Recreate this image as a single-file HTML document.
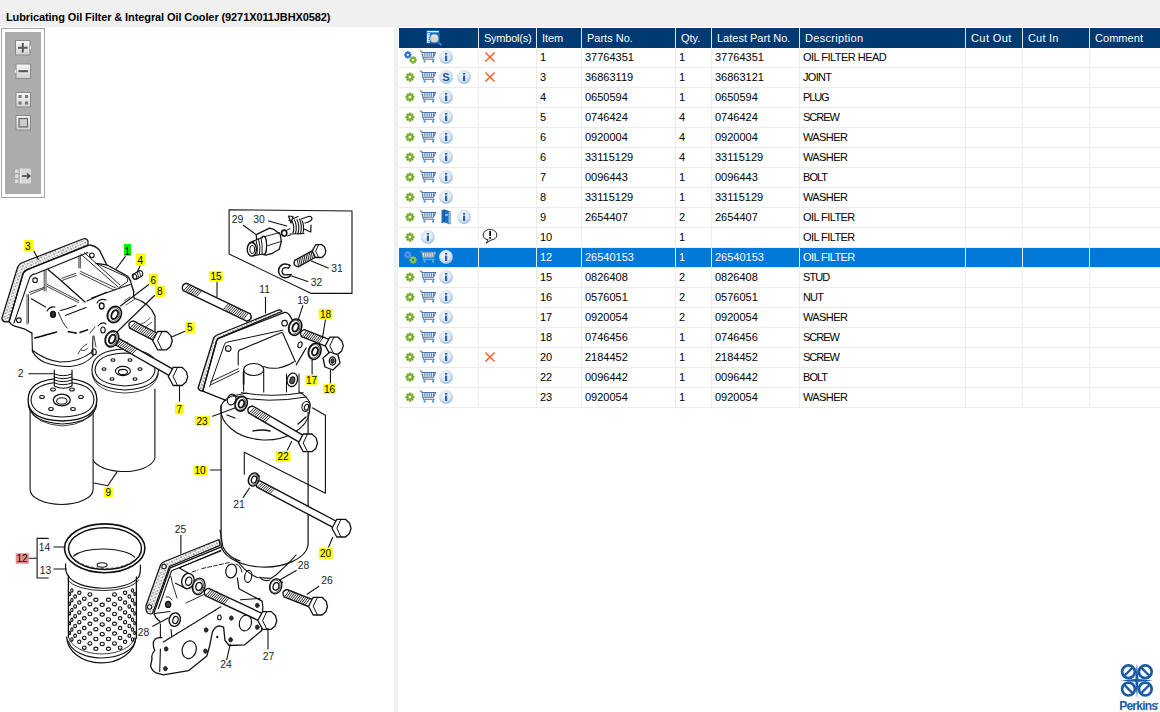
<!DOCTYPE html>
<html><head><meta charset="utf-8">
<style>
*{margin:0;padding:0;box-sizing:border-box}
html,body{width:1160px;height:712px;overflow:hidden;background:#fff;font-family:"Liberation Sans",sans-serif}
.a{position:absolute}
.t{position:absolute;font-size:11px;line-height:13px;white-space:nowrap;color:#000}
.h{color:#fff}
.ttl{font-weight:bold;color:#000}
svg{position:absolute;overflow:visible}
</style></head><body>

<div class="a" style="left:0;top:0;width:1160px;height:27px;background:#f0f0f0"></div>
<div class="t ttl" style="left:6px;top:11px;letter-spacing:-0.1px">Lubricating Oil Filter &amp; Integral Oil Cooler (9271X011JBHX0582)</div>
<div class="a" style="left:394px;top:27px;width:4px;height:685px;background:#f0f0f0"></div>
<div class="a" style="left:1px;top:28px;width:44px;height:170px;border:1px solid #a4a4a4;background:#fff"></div>
<div class="a" style="left:5px;top:32px;width:36px;height:162px;background:#acacac"></div>
<div class="a" style="left:399px;top:28px;width:761px;height:20px;background:#003a72"></div>
<div class="a" style="left:478px;top:28px;width:1px;height:20px;background:#dfe5ee"></div>
<div class="a" style="left:536px;top:28px;width:1px;height:20px;background:#dfe5ee"></div>
<div class="a" style="left:581px;top:28px;width:1px;height:20px;background:#dfe5ee"></div>
<div class="a" style="left:675px;top:28px;width:1px;height:20px;background:#dfe5ee"></div>
<div class="a" style="left:711px;top:28px;width:1px;height:20px;background:#dfe5ee"></div>
<div class="a" style="left:799px;top:28px;width:1px;height:20px;background:#dfe5ee"></div>
<div class="a" style="left:965px;top:28px;width:1px;height:20px;background:#dfe5ee"></div>
<div class="a" style="left:1022px;top:28px;width:1px;height:20px;background:#dfe5ee"></div>
<div class="a" style="left:1089px;top:28px;width:1px;height:20px;background:#dfe5ee"></div>
<div class="t h" style="left:484px;top:31.8px;letter-spacing:-0.24px">Symbol(s)</div>
<div class="t h" style="left:542px;top:31.8px;letter-spacing:-0.05px">Item</div>
<div class="t h" style="left:587px;top:31.8px;letter-spacing:0px">Parts No.</div>
<div class="t h" style="left:681px;top:31.8px;letter-spacing:0px">Qty.</div>
<div class="t h" style="left:717px;top:31.8px;letter-spacing:0px">Latest Part No.</div>
<div class="t h" style="left:805px;top:31.8px;letter-spacing:0.3px">Description</div>
<div class="t h" style="left:971px;top:31.8px;letter-spacing:0.42px">Cut Out</div>
<div class="t h" style="left:1028px;top:31.8px;letter-spacing:0.18px">Cut In</div>
<div class="t h" style="left:1095px;top:31.8px;letter-spacing:0.05px">Comment</div>
<div class="a" style="left:399px;top:248px;width:761px;height:19px;background:#0078d7"></div>
<div class="a" style="left:399px;top:67px;width:761px;height:1px;background:#ececec"></div>
<div class="a" style="left:399px;top:87px;width:761px;height:1px;background:#ececec"></div>
<div class="a" style="left:399px;top:107px;width:761px;height:1px;background:#ececec"></div>
<div class="a" style="left:399px;top:127px;width:761px;height:1px;background:#ececec"></div>
<div class="a" style="left:399px;top:147px;width:761px;height:1px;background:#ececec"></div>
<div class="a" style="left:399px;top:167px;width:761px;height:1px;background:#ececec"></div>
<div class="a" style="left:399px;top:187px;width:761px;height:1px;background:#ececec"></div>
<div class="a" style="left:399px;top:207px;width:761px;height:1px;background:#ececec"></div>
<div class="a" style="left:399px;top:227px;width:761px;height:1px;background:#ececec"></div>
<div class="a" style="left:399px;top:247px;width:761px;height:1px;background:#ececec"></div>
<div class="a" style="left:399px;top:267px;width:761px;height:1px;background:#ececec"></div>
<div class="a" style="left:399px;top:287px;width:761px;height:1px;background:#ececec"></div>
<div class="a" style="left:399px;top:307px;width:761px;height:1px;background:#ececec"></div>
<div class="a" style="left:399px;top:327px;width:761px;height:1px;background:#ececec"></div>
<div class="a" style="left:399px;top:347px;width:761px;height:1px;background:#ececec"></div>
<div class="a" style="left:399px;top:367px;width:761px;height:1px;background:#ececec"></div>
<div class="a" style="left:399px;top:387px;width:761px;height:1px;background:#ececec"></div>
<div class="a" style="left:399px;top:407px;width:761px;height:1px;background:#ececec"></div>
<div class="a" style="left:478px;top:48px;width:1px;height:360px;background:#ececec"></div>
<div class="a" style="left:536px;top:48px;width:1px;height:360px;background:#ececec"></div>
<div class="a" style="left:581px;top:48px;width:1px;height:360px;background:#ececec"></div>
<div class="a" style="left:675px;top:48px;width:1px;height:360px;background:#ececec"></div>
<div class="a" style="left:711px;top:48px;width:1px;height:360px;background:#ececec"></div>
<div class="a" style="left:799px;top:48px;width:1px;height:360px;background:#ececec"></div>
<div class="a" style="left:965px;top:48px;width:1px;height:360px;background:#ececec"></div>
<div class="a" style="left:1022px;top:48px;width:1px;height:360px;background:#ececec"></div>
<div class="a" style="left:1089px;top:48px;width:1px;height:360px;background:#ececec"></div>
<div class="t" style="left:540px;top:51px;letter-spacing:0px">1</div>
<div class="t" style="left:585px;top:51px;letter-spacing:0px">37764351</div>
<div class="t" style="left:679px;top:51px;letter-spacing:0px">1</div>
<div class="t" style="left:715px;top:51px;letter-spacing:0px">37764351</div>
<div class="t" style="left:803px;top:51px;letter-spacing:-0.52px">OIL FILTER HEAD</div>
<div class="t" style="left:540px;top:71px;letter-spacing:0px">3</div>
<div class="t" style="left:585px;top:71px;letter-spacing:0px">36863119</div>
<div class="t" style="left:679px;top:71px;letter-spacing:0px">1</div>
<div class="t" style="left:715px;top:71px;letter-spacing:0px">36863121</div>
<div class="t" style="left:803px;top:71px;letter-spacing:-0.68px">JOINT</div>
<div class="t" style="left:540px;top:91px;letter-spacing:0px">4</div>
<div class="t" style="left:585px;top:91px;letter-spacing:0px">0650594</div>
<div class="t" style="left:679px;top:91px;letter-spacing:0px">1</div>
<div class="t" style="left:715px;top:91px;letter-spacing:0px">0650594</div>
<div class="t" style="left:803px;top:91px;letter-spacing:-1.1px">PLUG</div>
<div class="t" style="left:540px;top:111px;letter-spacing:0px">5</div>
<div class="t" style="left:585px;top:111px;letter-spacing:0px">0746424</div>
<div class="t" style="left:679px;top:111px;letter-spacing:0px">4</div>
<div class="t" style="left:715px;top:111px;letter-spacing:0px">0746424</div>
<div class="t" style="left:803px;top:111px;letter-spacing:-1.0px">SCREW</div>
<div class="t" style="left:540px;top:131px;letter-spacing:0px">6</div>
<div class="t" style="left:585px;top:131px;letter-spacing:0px">0920004</div>
<div class="t" style="left:679px;top:131px;letter-spacing:0px">4</div>
<div class="t" style="left:715px;top:131px;letter-spacing:0px">0920004</div>
<div class="t" style="left:803px;top:131px;letter-spacing:-0.6px">WASHER</div>
<div class="t" style="left:540px;top:151px;letter-spacing:0px">6</div>
<div class="t" style="left:585px;top:151px;letter-spacing:0px">33115129</div>
<div class="t" style="left:679px;top:151px;letter-spacing:0px">4</div>
<div class="t" style="left:715px;top:151px;letter-spacing:0px">33115129</div>
<div class="t" style="left:803px;top:151px;letter-spacing:-0.6px">WASHER</div>
<div class="t" style="left:540px;top:171px;letter-spacing:0px">7</div>
<div class="t" style="left:585px;top:171px;letter-spacing:0px">0096443</div>
<div class="t" style="left:679px;top:171px;letter-spacing:0px">1</div>
<div class="t" style="left:715px;top:171px;letter-spacing:0px">0096443</div>
<div class="t" style="left:803px;top:171px;letter-spacing:-0.95px">BOLT</div>
<div class="t" style="left:540px;top:191px;letter-spacing:0px">8</div>
<div class="t" style="left:585px;top:191px;letter-spacing:0px">33115129</div>
<div class="t" style="left:679px;top:191px;letter-spacing:0px">1</div>
<div class="t" style="left:715px;top:191px;letter-spacing:0px">33115129</div>
<div class="t" style="left:803px;top:191px;letter-spacing:-0.6px">WASHER</div>
<div class="t" style="left:540px;top:211px;letter-spacing:0px">9</div>
<div class="t" style="left:585px;top:211px;letter-spacing:0px">2654407</div>
<div class="t" style="left:679px;top:211px;letter-spacing:0px">2</div>
<div class="t" style="left:715px;top:211px;letter-spacing:0px">2654407</div>
<div class="t" style="left:803px;top:211px;letter-spacing:-0.58px">OIL FILTER</div>
<div class="t" style="left:540px;top:231px;letter-spacing:0px">10</div>
<div class="t" style="left:679px;top:231px;letter-spacing:0px">1</div>
<div class="t" style="left:803px;top:231px;letter-spacing:-0.58px">OIL FILTER</div>
<div class="t h" style="left:540px;top:251px;letter-spacing:0px">12</div>
<div class="t h" style="left:585px;top:251px;letter-spacing:0px">26540153</div>
<div class="t h" style="left:679px;top:251px;letter-spacing:0px">1</div>
<div class="t h" style="left:715px;top:251px;letter-spacing:0px">26540153</div>
<div class="t h" style="left:803px;top:251px;letter-spacing:-0.58px">OIL FILTER</div>
<div class="t" style="left:540px;top:271px;letter-spacing:0px">15</div>
<div class="t" style="left:585px;top:271px;letter-spacing:0px">0826408</div>
<div class="t" style="left:679px;top:271px;letter-spacing:0px">2</div>
<div class="t" style="left:715px;top:271px;letter-spacing:0px">0826408</div>
<div class="t" style="left:803px;top:271px;letter-spacing:-0.9px">STUD</div>
<div class="t" style="left:540px;top:291px;letter-spacing:0px">16</div>
<div class="t" style="left:585px;top:291px;letter-spacing:0px">0576051</div>
<div class="t" style="left:679px;top:291px;letter-spacing:0px">2</div>
<div class="t" style="left:715px;top:291px;letter-spacing:0px">0576051</div>
<div class="t" style="left:803px;top:291px;letter-spacing:-0.85px">NUT</div>
<div class="t" style="left:540px;top:311px;letter-spacing:0px">17</div>
<div class="t" style="left:585px;top:311px;letter-spacing:0px">0920054</div>
<div class="t" style="left:679px;top:311px;letter-spacing:0px">2</div>
<div class="t" style="left:715px;top:311px;letter-spacing:0px">0920054</div>
<div class="t" style="left:803px;top:311px;letter-spacing:-0.6px">WASHER</div>
<div class="t" style="left:540px;top:331px;letter-spacing:0px">18</div>
<div class="t" style="left:585px;top:331px;letter-spacing:0px">0746456</div>
<div class="t" style="left:679px;top:331px;letter-spacing:0px">1</div>
<div class="t" style="left:715px;top:331px;letter-spacing:0px">0746456</div>
<div class="t" style="left:803px;top:331px;letter-spacing:-1.0px">SCREW</div>
<div class="t" style="left:540px;top:351px;letter-spacing:0px">20</div>
<div class="t" style="left:585px;top:351px;letter-spacing:0px">2184452</div>
<div class="t" style="left:679px;top:351px;letter-spacing:0px">1</div>
<div class="t" style="left:715px;top:351px;letter-spacing:0px">2184452</div>
<div class="t" style="left:803px;top:351px;letter-spacing:-1.0px">SCREW</div>
<div class="t" style="left:540px;top:371px;letter-spacing:0px">22</div>
<div class="t" style="left:585px;top:371px;letter-spacing:0px">0096442</div>
<div class="t" style="left:679px;top:371px;letter-spacing:0px">1</div>
<div class="t" style="left:715px;top:371px;letter-spacing:0px">0096442</div>
<div class="t" style="left:803px;top:371px;letter-spacing:-0.95px">BOLT</div>
<div class="t" style="left:540px;top:391px;letter-spacing:0px">23</div>
<div class="t" style="left:585px;top:391px;letter-spacing:0px">0920054</div>
<div class="t" style="left:679px;top:391px;letter-spacing:0px">1</div>
<div class="t" style="left:715px;top:391px;letter-spacing:0px">0920054</div>
<div class="t" style="left:803px;top:391px;letter-spacing:-0.6px">WASHER</div>
<svg width="1160" height="712" style="left:0;top:0">
<defs>
<radialGradient id="ig" cx="0.45" cy="0.4" r="0.6"><stop offset="0" stop-color="#f4f8fc"/><stop offset="0.6" stop-color="#dce8f4"/><stop offset="1" stop-color="#9fbddc"/></radialGradient>
<symbol id="gear" viewBox="-6 -6 12 12" overflow="visible"><path d="M-1.1,-5.2 L1.1,-5.2 L1.5,-3.6 L2.9,-4.3 L4.3,-2.9 L3.6,-1.5 L5.2,-1.1 L5.2,1.1 L3.6,1.5 L4.3,2.9 L2.9,4.3 L1.5,3.6 L1.1,5.2 L-1.1,5.2 L-1.5,3.6 L-2.9,4.3 L-4.3,2.9 L-3.6,1.5 L-5.2,1.1 L-5.2,-1.1 L-3.6,-1.5 L-4.3,-2.9 L-2.9,-4.3 L-1.5,-3.6 Z M0,-1.6 A1.6,1.6 0 1 0 0.01,-1.6 Z" fill-rule="evenodd"/></symbol>
<symbol id="cart" viewBox="0 0 17 14" overflow="visible"><g fill="none" stroke="#4a6d9f" stroke-width="1.05" stroke-linejoin="round"><path d="M0.5,0.6 L2.3,2 L3.8,9.3 L15,9.3"/><path d="M2.6,2.5 L16,2.5 L13.8,7.2 L3.6,7.2"/><path d="M5.2,3 V6.6 M7.4,3 V6.6 M9.6,3 V6.6 M11.8,3 V6.6 M13.9,3 V6" stroke-width="0.9"/><path d="M3,4.8 H15" stroke-width="0.6" stroke="#7d98bd"/></g><rect x="4" y="10.4" width="2" height="2" fill="#3c8ad8"/><rect x="12.5" y="10.4" width="2" height="2" fill="#3c8ad8"/></symbol>
<symbol id="cartsel" viewBox="0 0 17 14" overflow="visible"><g fill="none" stroke="#8d9ab0" stroke-width="1.2" stroke-linejoin="round"><path d="M0.5,0.6 L2.3,2 L3.8,9.3 L15,9.3"/><path d="M2.6,2.4 L16,2.4 L13.8,7.2 L3.6,7.2" fill="#dfe6ef"/><path d="M5,3 V6.6 M7.2,3 V6.6 M9.4,3 V6.6 M11.6,3 V6.6 M13.8,3 V6"/></g><rect x="4" y="10.4" width="2" height="2" fill="#9aa8c0"/><rect x="12.5" y="10.4" width="2" height="2" fill="#9aa8c0"/></symbol>
<symbol id="info" viewBox="0 0 14 14" overflow="visible"><circle cx="7" cy="7" r="6.9" fill="url(#ig)"/><rect x="6" y="5.6" width="2.2" height="5.4" fill="#2c5d9c"/><rect x="6" y="3" width="2.2" height="1.6" fill="#2c5d9c"/></symbol>
<symbol id="scirc" viewBox="0 0 14 14" overflow="visible"><circle cx="7" cy="7" r="6.9" fill="url(#ig)"/><text x="7" y="11" text-anchor="middle" font-family="Liberation Sans" font-weight="bold" font-size="11" fill="#0c5799">S</text></symbol>
<symbol id="xm" viewBox="0 0 11 11" overflow="visible"><path d="M0.8,0.8 L10,10 M10,0.8 L0.8,10" stroke="#ff5b1f" stroke-width="1.4"/></symbol>
<symbol id="book" viewBox="0 0 10 16" overflow="visible"><path d="M0.5,1.5 L3,0.3 L9.5,2.5 L9.5,15.5 L3,13.3 L0.5,14.5 Z" fill="#1a6cc0"/><path d="M3,1 L3,13.3" stroke="#0d4f99" stroke-width="0.8"/><path d="M8.2,3 L8.2,14.5" stroke="#d8e8f8" stroke-width="1"/><ellipse cx="5.5" cy="6" rx="1.6" ry="1.3" fill="#8fb8e4"/></symbol>
<symbol id="bub" viewBox="0 0 15 15" overflow="visible"><path d="M5.5,11.2 C2.4,10.8 0.6,9 0.6,6.4 C0.6,3.3 3.6,0.8 7.4,0.8 C11.2,0.8 14.2,3.3 14.2,6.4 C14.2,9.3 11.6,11.3 8.4,11.4 L3.6,14.6 Z" fill="#fff" stroke="#222" stroke-width="1"/><rect x="6.6" y="2.4" width="1.8" height="5" fill="#111"/><rect x="6.6" y="8.4" width="1.8" height="1.8" fill="#111"/></symbol>
</defs>
<g><rect x="426.2" y="30.1" width="13.3" height="13.3" fill="#1a6fc4"/><rect x="427.1" y="31" width="11.6" height="1.3" fill="#e8f0f8"/><rect x="427.1" y="33.2" width="2.8" height="9.6" fill="#f4f8fc"/>
<g fill="#1a6fc4"><rect x="428.4" y="34.5" width="1.2" height="1"/><rect x="428.4" y="36.8" width="1.2" height="1"/><rect x="428.4" y="39.1" width="1.2" height="1"/><rect x="428.4" y="41.2" width="1.2" height="1"/></g>
<path d="M437.6,41.3 L441.4,45.3" stroke="#2a78c8" stroke-width="2.2"/>
<circle cx="434.4" cy="38.4" r="5" fill="#2a6cb8"/><circle cx="434.4" cy="38.4" r="4.1" fill="#d6d6d6"/><path d="M432,36 Q434,35 436.5,36.5" stroke="#fff" stroke-width="1" fill="none"/></g>
<use href="#gear" x="403.5" y="50.5" width="8.6" height="8.6" fill="#2f6fe0"/>
<use href="#gear" x="408.8" y="55.6" width="8.6" height="8.6" fill="#78b12c"/>
<use href="#cart" x="419.6" y="50" width="17" height="14"/>
<use href="#info" x="439" y="50" width="14" height="14"/>
<use href="#xm" x="484.6" y="51.6" width="11" height="11"/>
<use href="#gear" x="404.6" y="71.8" width="10.6" height="10.6" fill="#78b12c"/>
<use href="#cart" x="419.6" y="70" width="17" height="14"/>
<use href="#scirc" x="439" y="70" width="14" height="14"/>
<use href="#info" x="457" y="70" width="14" height="14"/>
<use href="#xm" x="484.6" y="71.6" width="11" height="11"/>
<use href="#gear" x="404.6" y="91.8" width="10.6" height="10.6" fill="#78b12c"/>
<use href="#cart" x="419.6" y="90" width="17" height="14"/>
<use href="#info" x="439" y="90" width="14" height="14"/>
<use href="#gear" x="404.6" y="111.8" width="10.6" height="10.6" fill="#78b12c"/>
<use href="#cart" x="419.6" y="110" width="17" height="14"/>
<use href="#info" x="439" y="110" width="14" height="14"/>
<use href="#gear" x="404.6" y="131.8" width="10.6" height="10.6" fill="#78b12c"/>
<use href="#cart" x="419.6" y="130" width="17" height="14"/>
<use href="#info" x="439" y="130" width="14" height="14"/>
<use href="#gear" x="404.6" y="151.8" width="10.6" height="10.6" fill="#78b12c"/>
<use href="#cart" x="419.6" y="150" width="17" height="14"/>
<use href="#info" x="439" y="150" width="14" height="14"/>
<use href="#gear" x="404.6" y="171.8" width="10.6" height="10.6" fill="#78b12c"/>
<use href="#cart" x="419.6" y="170" width="17" height="14"/>
<use href="#info" x="439" y="170" width="14" height="14"/>
<use href="#gear" x="404.6" y="191.8" width="10.6" height="10.6" fill="#78b12c"/>
<use href="#cart" x="419.6" y="190" width="17" height="14"/>
<use href="#info" x="439" y="190" width="14" height="14"/>
<use href="#gear" x="404.6" y="211.8" width="10.6" height="10.6" fill="#78b12c"/>
<use href="#cart" x="419.6" y="210" width="17" height="14"/>
<use href="#book" x="441" y="209" width="10" height="16"/>
<use href="#info" x="457" y="210" width="14" height="14"/>
<use href="#gear" x="404.6" y="231.8" width="10.6" height="10.6" fill="#78b12c"/>
<use href="#info" x="420.8" y="230" width="14" height="14"/>
<use href="#bub" x="482.6" y="228.6" width="15" height="15"/>
<use href="#gear" x="403.5" y="250.5" width="8.6" height="8.6" fill="#5b8ef2"/>
<use href="#gear" x="408.8" y="255.6" width="8.6" height="8.6" fill="#94c83a"/>
<use href="#cartsel" x="419.6" y="250" width="17" height="14"/>
<use href="#info" x="439" y="250" width="14" height="14"/>
<use href="#gear" x="404.6" y="271.8" width="10.6" height="10.6" fill="#78b12c"/>
<use href="#cart" x="419.6" y="270" width="17" height="14"/>
<use href="#info" x="439" y="270" width="14" height="14"/>
<use href="#gear" x="404.6" y="291.8" width="10.6" height="10.6" fill="#78b12c"/>
<use href="#cart" x="419.6" y="290" width="17" height="14"/>
<use href="#info" x="439" y="290" width="14" height="14"/>
<use href="#gear" x="404.6" y="311.8" width="10.6" height="10.6" fill="#78b12c"/>
<use href="#cart" x="419.6" y="310" width="17" height="14"/>
<use href="#info" x="439" y="310" width="14" height="14"/>
<use href="#gear" x="404.6" y="331.8" width="10.6" height="10.6" fill="#78b12c"/>
<use href="#cart" x="419.6" y="330" width="17" height="14"/>
<use href="#info" x="439" y="330" width="14" height="14"/>
<use href="#gear" x="404.6" y="351.8" width="10.6" height="10.6" fill="#78b12c"/>
<use href="#cart" x="419.6" y="350" width="17" height="14"/>
<use href="#info" x="439" y="350" width="14" height="14"/>
<use href="#xm" x="484.6" y="351.6" width="11" height="11"/>
<use href="#gear" x="404.6" y="371.8" width="10.6" height="10.6" fill="#78b12c"/>
<use href="#cart" x="419.6" y="370" width="17" height="14"/>
<use href="#info" x="439" y="370" width="14" height="14"/>
<use href="#gear" x="404.6" y="391.8" width="10.6" height="10.6" fill="#78b12c"/>
<use href="#cart" x="419.6" y="390" width="17" height="14"/>
<use href="#info" x="439" y="390" width="14" height="14"/>
</svg>
<svg width="60" height="200" style="left:0;top:0">
<defs><linearGradient id="bg" x1="0" y1="0" x2="0" y2="1"><stop offset="0" stop-color="#f6f6f6"/><stop offset="1" stop-color="#d2d2d2"/></linearGradient></defs>
<rect x="15.5" y="40.5" width="14.5" height="14.5" fill="url(#bg)" stroke="#8a8a8a" stroke-width="1"/><path d="M30,45 L32,47.7 L30,50.5" fill="#eee" stroke="#999" stroke-width="0.8"/><path d="M18,47.8 H27.5 M22.8,43 V52.6" stroke="#555" stroke-width="2"/>
<rect x="16" y="64" width="14.5" height="14.5" fill="url(#bg)" stroke="#8a8a8a" stroke-width="1"/><path d="M16,68.5 L14,71.2 L16,74" fill="#eee" stroke="#999" stroke-width="0.8"/><path d="M18.5,71.2 H28" stroke="#555" stroke-width="2"/>
<rect x="16" y="92.5" width="14.5" height="14.5" fill="url(#bg)" stroke="#8a8a8a" stroke-width="1"/><rect x="18.5" y="95" width="3" height="3" fill="#777"/><rect x="25" y="95" width="3" height="3" fill="#777"/><rect x="18.5" y="101.5" width="3" height="3" fill="#777"/><rect x="25" y="101.5" width="3" height="3" fill="#777"/>
<rect x="16" y="115.5" width="14.5" height="14.5" fill="url(#bg)" stroke="#8a8a8a" stroke-width="1"/><rect x="19" y="118.5" width="8.5" height="8.5" fill="#ccc" stroke="#666" stroke-width="1.2"/>
<rect x="14.5" y="169" width="4.5" height="4.5" fill="#ddd" stroke="#999" stroke-width="0.6"/><rect x="14.5" y="174" width="4.5" height="4.5" fill="#ddd" stroke="#999" stroke-width="0.6"/><rect x="14.5" y="179" width="4.5" height="4.5" fill="#ddd" stroke="#999" stroke-width="0.6"/>
<rect x="20" y="168.5" width="11" height="15" fill="#d8d8d8"/><path d="M20.5,168.5 V183.5" stroke="#fafafa" stroke-width="1"/><path d="M22,176 H29.5 M27,173.5 L29.8,176 L27,178.5" stroke="#444" stroke-width="1.5" fill="none"/>

</svg>
<svg width="394" height="712" style="left:0;top:0" viewBox="0 0 394 712">
<defs>
<pattern id="dots" width="3.6" height="3.6" patternUnits="userSpaceOnUse" patternTransform="rotate(20)"><rect width="3.6" height="3.6" fill="#fff"/><circle cx="0.9" cy="0.9" r="0.7" fill="#111"/><circle cx="2.7" cy="2.6" r="0.5" fill="#444"/></pattern>
</defs>
<g fill="none" stroke="#111" stroke-width="1.1" stroke-linecap="round" stroke-linejoin="round">
<!-- ===== Gasket 3 + Head 1 ===== -->
<path d="M1.8,318.5 L17.5,267.5 Q19,263.5 22.5,262.5 L83.5,238.8 Q86.8,237.8 88,241 L88,245 L30.2,268.5 Q25,270.5 23.2,273.2 L9.1,321.6 Q3,323 1.8,318.5 Z" fill="url(#dots)" stroke-width="1.2"/>
<path d="M9.1,321.6 L23.2,273.2 Q25,269.8 30.2,268.5 L89.7,245 Q96,246 99.6,250.4 L106.7,264.8" stroke-width="1.3"/>
<path d="M14,323 L29.5,278.1 Q31,274.5 35.1,273.9 L88,252.5"/>
<path d="M9.1,321.6 Q12,326 18.2,327.2 L25,329.2 L31.9,333.1" stroke-width="1.3"/>
<circle cx="35.1" cy="280.2" r="2.3"/><circle cx="18.9" cy="320.2" r="2.3"/><circle cx="91.9" cy="255.3" r="2.3"/>
<path d="M44.2,270.5 V291 M46,270.5 V291 M78.9,256 V268 M80.3,256 V268" stroke-width="0.8"/>
<path d="M61.9,278.3 L75.7,273.4 M62.5,280.3 L76.3,275.4" stroke-width="0.8"/>
<path d="M80.6,271.4 L116,288.1 M80,273.4 L114,290" stroke-width="0.8"/>
<path d="M29.4,292.3 L44.2,287.4 M30.4,294.3 L43.7,288.8" stroke-width="0.8"/>
<path d="M47.1,286.4 L78.6,302.6 M47.5,284.6 L79,300.8" stroke-width="0.8"/>
<path d="M31.4,298.7 L45.6,307"/>
<path d="M60.4,280 L85,302.1 M48,269.5 L60.4,280" stroke-width="1.3"/>
<path d="M80.7,254 L118.4,287.2 M84.3,252.6 L120,285" stroke-width="0.9"/>
<path d="M87,301.1 L106.6,292.3"/>
<path d="M65.3,315.4 L86,307.5 M60.4,310.5 Q68,309 76.1,305.6"/>
<path d="M27,294.7 V324.2 M28.5,294.7 V323" stroke-width="0.8"/>
<ellipse cx="53" cy="314.4" rx="2.4" ry="2.8" fill="#333" stroke-width="1.5"/>
<path d="M47,311 Q50,306 55,307"/>
<path d="M58.4,312.4 Q61,318 62.4,321.3 Q65,326 67.3,328.2" stroke-width="0.9"/>
<path d="M96,263.4 L106.7,264.8 L126.5,275.6 Q130,278 131,282.7 L133.7,291.7" stroke-width="1.3"/>
<path d="M97.8,263.9 L125.6,276.4 Q129,279 127.4,281.8 L119.3,287.2" stroke-width="0.9"/>
<path d="M91.5,298 L130.1,284.5"/>
<ellipse cx="101.7" cy="306" rx="2.4" ry="3" stroke-width="1.3"/>
<path d="M97,303 Q100,298 106,300"/>
<path d="M34.8,338 L56.5,332.1 M68.3,331.6 L76.1,333.1 M80,332.5 L87.9,329.7" stroke-width="1.6" stroke-dasharray="2 1"/>
<path d="M31.9,333.1 L32.4,351.6 Q37,359 45,362.5 Q58,367 70,366.5 Q85,365 93,356 L92.7,345 L93,336"/>
<path d="M32.3,350.2 Q45,360 60,362 Q80,362 92.7,351.3"/>
<ellipse cx="103" cy="330" rx="2.2" ry="3" />
<path d="M98,326 Q102,321 106,324"/>
<path d="M90,333 L95,327 M94,336 L96,347" stroke-width="0.8"/>
<path d="M78,354 Q82,346 87,344 M81,350 Q84,352 88,348" stroke-width="0.8"/>
<ellipse cx="94" cy="352" rx="2.3" ry="3" />
<path d="M133.7,291.7 Q133,296 134,298 Q150,303 155,316 L155,332" stroke-width="1.2"/>
<path d="M124,301 L130,297 M126,305 L135,299" stroke-width="0.7"/>
<path d="M139,325 Q146,323 150,318 M142,330 L152,322" stroke-width="0.7"/>
<path d="M116,345 L128,342 M120,348 L127,346" stroke-width="0.7"/>
<!-- plug 4 -->
<path d="M134.5,273.5 L140,270.5 Q143.5,271 142.5,275.5 L137,279 Q133,280 132.8,277 Q132.8,274.5 134.5,273.5 Z" fill="#fff" stroke-width="1.2"/>
<ellipse cx="134.6" cy="276.5" rx="2" ry="2.8" transform="rotate(-30 134.6 276.5)" stroke-width="1.1"/>
<path d="M137,272.5 L139,277.5 M139,271.5 L141,276.5" stroke-width="0.8"/>

<!-- ===== Filter 9 right (behind) ===== -->
<path d="M92.4,388 V455 A31.3,15 0 0 0 154.9,458 V389"/>
<path d="M91.9,370 Q92,350 125,349 Q158,350 158.5,370 Q158,388 125,390 Q92,388 91.9,370 Z" fill="#fff"/>
<path d="M95,370 Q96,354 125,353 Q155,354 155,370 Q154,384 125,386 Q96,384 95,370 Z"/>
<path d="M92,374 Q95,392 125,393 Q155,392 158.3,374" stroke-width="0.8"/>
<ellipse cx="122.9" cy="371" rx="7.5" ry="4.6"/>
<ellipse cx="122.9" cy="372" rx="4.5" ry="2.6"/>
<g><ellipse cx="104" cy="369" rx="2" ry="1.3"/><ellipse cx="113" cy="360" rx="2" ry="1.3"/><ellipse cx="130" cy="360" rx="2" ry="1.3"/><ellipse cx="140" cy="369" rx="2" ry="1.3"/><ellipse cx="135" cy="379" rx="2" ry="1.3"/><ellipse cx="112" cy="379" rx="2" ry="1.3"/></g>

<!-- ===== Filter 9 left ===== -->
<path d="M30.1,410 V489.5 A31.5,15 0 0 0 93.1,489.5 V410" fill="#fff"/>
<path d="M28.1,400 Q28,379 62.5,378.3 Q97,379 96.9,400 Q96,420 62.5,421 Q28,420 28.1,400 Z" fill="#fff" stroke-width="1.3"/>
<path d="M31,400 Q32,383 62.5,382 Q94,383 94,400 Q93,416 62.5,417 Q32,416 31,400 Z"/>
<path d="M28.2,404 Q30,422 62.5,424 Q95,422 96.8,404"/>
<path d="M30.2,410 Q36,424 62.5,426 Q88,424 93,410" stroke-width="0.8"/>
<ellipse cx="61.8" cy="400" rx="8.5" ry="5.8" stroke-width="1.3"/>
<ellipse cx="61.8" cy="401" rx="5.2" ry="3.3"/>
<g><ellipse cx="42" cy="397" rx="2.3" ry="1.5"/><ellipse cx="53" cy="389.5" rx="2.3" ry="1.5"/><ellipse cx="72" cy="389.5" rx="2.3" ry="1.5"/><ellipse cx="81" cy="397" rx="2.3" ry="1.5"/><ellipse cx="73" cy="409" rx="2.3" ry="1.5"/><ellipse cx="51" cy="409" rx="2.3" ry="1.5"/></g>
<!-- spigot 2 -->
<path d="M54.3,369 V386 Q63,390.5 72,386 V369 Z" fill="#fff" stroke="none"/>
<path d="M54.3,370 V386 Q63,390.5 72,386 V370" stroke-width="1.2"/>
<path d="M54.5,374 Q63,377.5 71.8,374 M54.5,377 Q63,380.5 71.8,377 M54.5,380 Q63,383.5 71.8,380 M54.5,383 Q63,386.5 71.8,383" stroke-width="1"/>
<path d="M28.8,373.8 H53.4"/>

<!-- ===== Box with 29-32 ===== -->
<path d="M229.1,209.8 L352,211 L352,293.4 L311.3,293.4 L229.1,254.1 Z"/>
<!-- adapter 29 -->
<path d="M256.2,234.6 L269.5,228.2 L274.4,229.7 L280.3,234.6 L281.3,241.5 L279.3,249.3 L272.4,253.3 L265.6,255.2 L258,252 Z" fill="#fff" stroke-width="1.3"/>
<path d="M265,236.5 L279.8,232.5 M265,236.5 L266.5,251.3 M266.5,246 L281,241.5" stroke-width="0.9"/>
<ellipse cx="263.6" cy="245.4" rx="3" ry="9.2" fill="#fff" stroke-width="1.2"/>
<path d="M250,242.5 L262,237.5 L263,254 L252,256 Z" fill="#fff" stroke="none"/>
<path d="M250,242.5 L262,237.5 M252.5,256 L263,254" stroke-width="1.2"/>
<path d="M253.5,241 Q256,248 254.5,255.5 M256,240 Q258.5,247 257,254.5 M258.5,239 Q261,246 259.5,254 M261,238 Q263,245 262,253.5" stroke-width="1"/>
<ellipse cx="251.8" cy="249.3" rx="4.6" ry="6.8" fill="#fff" stroke-width="1.4"/>
<ellipse cx="252.2" cy="249.5" rx="2.4" ry="4" stroke-width="1"/>
<path d="M243.2,225.3 L255.8,234.4"/>
<!-- valve 30 -->
<path d="M290,224 L299,219 L303,224 L304,233 L296,235 L289,232 Z" fill="#fff" stroke="none"/>
<path d="M292,221 Q295,227 293,233 M294.5,220 Q297.5,226 295.5,233.5 M297,219.5 Q300,225 298,234 M299.5,219 Q302.5,225 300.5,234 M302,220 Q304.5,226 303,233" stroke-width="1.1"/>
<path d="M289,220.5 L298,216.5 M290,234 L304,233.5"/>
<path d="M288.5,216 L291,223 L293,216.5 Z M301,219 L308.5,216.5 Q312,216 312,219 Q311,221.5 305,223 M304,229 L310.8,232 L311,225" stroke-width="1.2" fill="#fff"/>
<ellipse cx="284.2" cy="233.1" rx="2.6" ry="3" stroke-width="1.6"/>
<path d="M287,230 L290,228.5 M287.5,236 L290.5,235" stroke-width="1"/>
<path d="M268.5,221 L286.7,226"/>
<!-- clip 32 -->
<path d="M290,265.5 Q286.5,263.3 283,264.3 Q278.3,266.5 278.6,271.5 Q279.5,277 285,277.8 Q289.8,277.8 291,274.5" stroke-width="1.5"/>
<path d="M288.5,268.2 Q285.5,266.8 283,268.5 Q281.3,271 282.5,273.5 Q284.5,275.5 288,274.6" stroke-width="1.3"/>
<path d="M290,265.5 L288.5,268.2 M291,274.5 L288,274.6" stroke-width="1.2"/>
<path d="M291.7,275.9 L307.8,281.5"/>
<path d="M311.3,261.1 L328.2,268.1"/>

<!-- ===== Cooler plate 11 ===== -->
<path d="M198.1,388 L213.5,338.6 Q214.5,336 217,335 L278.4,310 Q281,309.3 282,311.5 L219.7,337.8 Q217.5,338.5 216.6,340.9 L202.7,391.1 Q199,391 198.1,388 Z" fill="url(#dots)" stroke-width="1.3"/>
<path d="M202.7,391.1 L216.6,340.9 Q217.5,338.2 219.7,337.8 L284.6,312.4 Q287.5,312 289.2,314.7 L293.8,322.4" stroke-width="1.3"/>
<path d="M209.7,386.5 L224.3,344.8 Q225,342.6 226.5,342.3 L283,330.1" stroke-width="1"/>
<path d="M238.2,364.9 V353.3 Q238.5,349.8 241.3,349.4 L281.5,332.4 Q283,332.5 283.8,335.5 L295.4,361.8" stroke-width="1.1"/>
<path d="M210.4,381.9 L238.2,368.7 M211.5,384.5 L239,371.3" stroke-width="0.9"/>
<path d="M202.7,391.1 L225.9,400.4" stroke-width="1.3"/>
<circle cx="284.6" cy="323.2" r="2.8" stroke-width="1.1"/><circle cx="228.2" cy="348.6" r="2.8" stroke-width="1.1"/>
<path d="M265.5,297.3 V313"/>
<ellipse cx="300" cy="344.8" rx="2" ry="3" transform="rotate(20 300 344.8)"/>
<path d="M306.2,347.9 L296.2,364.9"/>
<!-- cooler top -->
<path d="M243.6,370 V391 M263.7,370 V392" stroke-width="1.1"/>
<ellipse cx="253.7" cy="369.5" rx="10" ry="6" fill="#fff" stroke-width="1.2"/>
<path d="M243.6,372 V384" stroke-width="1.7"/>
<path d="M263.7,366.4 Q270,369 278.4,368 Q288,366 293.8,361.8" stroke-width="1.1"/>
<path d="M241.3,392.7 Q272,398 303.1,392.7 M233,396 Q268,404 306,397" stroke-width="1"/>
<path d="M286.5,374 V392 M299,374 V392" stroke-width="1"/>
<ellipse cx="292.3" cy="379.8" rx="5.2" ry="6.8" transform="rotate(15 292.3 379.8)" fill="#fff" stroke-width="1.3"/>
<ellipse cx="292.3" cy="380.3" rx="2.4" ry="3.5" transform="rotate(15 292.3 380.3)" fill="#555" stroke-width="1"/>
<path d="M221,405.8 Q224,399 232,396 L247,393 M299,392 Q306,395 310,403 L309.6,412"/>
<path d="M221,405.8 A44.5,31 0 0 0 309.6,412"/>
<path d="M253,431 Q262,429 270,431 M298,424 L306,417 M227,415 L235,418" stroke-width="1.3"/>
<path d="M221.1,406 V541 A43.5,24 0 0 0 308.1,545 V412" stroke-width="1.2"/>
<path d="M235.4,558.8 Q245,572 257,577.5 L270.8,578.4 Q277,575 280.6,570.6 Q290,562 296,555"/>
<path d="M260,577 Q263,582 270,580" />
<path d="M244.3,452.2 V474.3 M244.3,452.2 L325.4,493.2 V415.3 L312.7,407.9"/>
<ellipse cx="231.6" cy="399.5" rx="4.2" ry="5.5" transform="rotate(20 231.6 399.5)"/>
<ellipse cx="306" cy="406.5" rx="4" ry="5" transform="rotate(20 306 406.5)"/>
<ellipse cx="306.5" cy="407" rx="2" ry="3" transform="rotate(20 306 407)"/>

<!-- ===== Gasket 25 + bracket 24 ===== -->
<path d="M219,539.5 L164.5,561.5 Q161,563 160.5,565 L146,605.8 Q145.5,611 147.5,612.9 Q150,614.5 152.4,613.5 L154.5,608 L169.5,566.5 L220,545.4 Z" fill="url(#dots)" stroke-width="1.2"/>
<circle cx="164" cy="566.5" r="2.2" fill="#fff" stroke-width="1.1"/><circle cx="149.6" cy="607" r="2.2" fill="#fff" stroke-width="1.1"/>
<path d="M180.9,535.5 V553.4"/>
<path d="M221.5,546.9 L170.2,567.9 L154,612.9 Q154.5,617 159.7,621.3" stroke-width="1.3"/>
<path d="M220.8,551.1 L171.6,570.7 L158.3,608.7"/>
<!-- upper tube -->
<path d="M179.4,567.9 L191,574.8 M175.5,583.3 L186.4,588.7" stroke-width="1.2"/>
<path d="M170.9,576.4 Q172,583 174,588.7 L177,598" stroke-width="0.9"/>
<ellipse cx="187.9" cy="581" rx="6.2" ry="7.7" transform="rotate(15 187.9 581)" fill="#fff" stroke-width="1.4"/>
<ellipse cx="188.7" cy="581.3" rx="3.1" ry="4.2" transform="rotate(15 188.7 581.3)" stroke-width="1.3"/>
<path d="M201.8,568.6 L229.6,562.5 M192,572 L198,570" stroke-dasharray="4 2" stroke-width="0.9"/>
<path d="M179.4,567.9 L221.1,550.1" stroke-width="1"/>
<ellipse cx="168.1" cy="604.4" rx="2.6" ry="3" fill="#444" stroke-width="1.2"/>
<path d="M166,597 Q170,596 172,600" stroke-width="0.9"/>
<!-- lower tube -->
<path d="M154.7,613.5 L170,611.5 M160.4,624 V637.7 M171,629.3 L171.7,636.3" stroke-width="1.1"/>
<ellipse cx="174.8" cy="619.6" rx="5.6" ry="6.8" transform="rotate(15 174.8 619.6)" fill="#fff" stroke-width="1.4"/>
<ellipse cx="175.5" cy="620" rx="2.6" ry="3.6" transform="rotate(15 175.5 620)" stroke-width="1.2"/>
<path d="M186,603 L205,594 M200,590 L217.3,591.8" stroke-width="0.9"/>
<!-- cooler mount right -->
<path d="M220,530 L222.9,546.9 Q226,553 231.3,556.7 Q236,560 240,560.9"/>
<ellipse cx="231.2" cy="571" rx="5.4" ry="7" transform="rotate(10 231.2 571)" stroke-width="1.2"/>
<path d="M237.4,577.9 L238.9,588.7 L262.1,601.1 L262.9,606.8 L261.5,630.7" stroke-width="1.2"/>
<path d="M236,564 Q241,566 242,572" stroke-width="1"/>
<ellipse cx="248.2" cy="576.4" rx="3.5" ry="6" transform="rotate(10 248.2 576.4)" stroke-width="1.2"/>
<path d="M240.5,599.8 L260.1,598.4" stroke-width="1"/>
<!-- plate 24 -->
<path d="M161.8,637.7 Q155,637 153.4,642 Q153,648 154.8,650.4 Q151,654 152,658.8 L150.6,665.8 Q152,671 156.2,672.8 L163.3,674.9 L188.5,670.7 L206.8,656 L209.6,646.2 L212.4,632.1 Q215,626 219.4,625.8 L223.6,627.2 L225,640.5 L229.2,645.5 L244.7,644.8 L261.5,630.7" stroke-width="1.3"/>
<path d="M163.3,642 L220.8,606.8" stroke-width="1.2" stroke-dasharray="2.5 1"/>
<path d="M160.4,649 L159.7,671.4"/>
<ellipse cx="189.2" cy="649.7" rx="7" ry="9" transform="rotate(15 189.2 649.7)" stroke-width="1.2"/>
<ellipse cx="245.4" cy="623" rx="6" ry="8" transform="rotate(15 245.4 623)"/>
<g fill="#333" stroke-width="0.8"><ellipse cx="166.1" cy="649" rx="1.8" ry="2.2"/><ellipse cx="165.4" cy="668.6" rx="1.8" ry="2.2"/><ellipse cx="205.4" cy="651.1" rx="1.8" ry="2.2"/><ellipse cx="206.1" cy="630" rx="1.8" ry="2.2"/><ellipse cx="231.3" cy="618.1" rx="1.8" ry="2.2"/><ellipse cx="230.6" cy="639.8" rx="1.8" ry="2.2"/><ellipse cx="257.3" cy="605.4" rx="1.8" ry="2.2"/><ellipse cx="257.3" cy="627.2" rx="1.8" ry="2.2"/></g>
<ellipse cx="219.4" cy="617.4" rx="1.8" ry="2.4"/>
<circle cx="217.3" cy="637" r="0.6" fill="#333"/>

<!-- ===== Filter 12 ===== -->
<path d="M68.4,576 V637" stroke-width="1.3"/><path d="M136.4,577 V638" stroke-width="1.3"/>
<path d="M66.7,637.2 A34.6,26.5 0 0 0 135.8,638.3" stroke-width="1.3"/>
<path d="M68.5,641 A33.5,19 0 0 0 135,641.5"/>
<path d="M68.5,637 A33.5,19 0 0 0 135,637.5" stroke-width="0.8"/>
<ellipse cx="71.9" cy="590.4" rx="1.10" ry="1.7" stroke-width="1.1"/>
<ellipse cx="79.3" cy="592.8" rx="1.63" ry="1.7" stroke-width="1.1"/>
<ellipse cx="89.9" cy="594.4" rx="1.98" ry="1.7" stroke-width="1.1"/>
<ellipse cx="114.5" cy="594.4" rx="1.98" ry="1.7" stroke-width="1.1"/>
<ellipse cx="125.1" cy="592.8" rx="1.63" ry="1.7" stroke-width="1.1"/>
<ellipse cx="132.5" cy="590.4" rx="1.10" ry="1.7" stroke-width="1.1"/>
<ellipse cx="69.8" cy="593.9" rx="0.79" ry="1.7" stroke-width="1.1"/>
<ellipse cx="75.1" cy="596.6" rx="1.38" ry="1.7" stroke-width="1.1"/>
<ellipse cx="84.3" cy="598.7" rx="1.83" ry="1.7" stroke-width="1.1"/>
<ellipse cx="95.9" cy="599.8" rx="2.07" ry="1.7" stroke-width="1.1"/>
<ellipse cx="108.5" cy="599.8" rx="2.07" ry="1.7" stroke-width="1.1"/>
<ellipse cx="120.1" cy="598.7" rx="1.83" ry="1.7" stroke-width="1.1"/>
<ellipse cx="129.3" cy="596.6" rx="1.38" ry="1.7" stroke-width="1.1"/>
<ellipse cx="134.6" cy="593.9" rx="0.79" ry="1.7" stroke-width="1.1"/>
<ellipse cx="71.9" cy="600.2" rx="1.10" ry="1.7" stroke-width="1.1"/>
<ellipse cx="79.3" cy="602.6" rx="1.63" ry="1.7" stroke-width="1.1"/>
<ellipse cx="89.9" cy="604.2" rx="1.98" ry="1.7" stroke-width="1.1"/>
<ellipse cx="102.2" cy="604.8" rx="2.10" ry="1.7" stroke-width="1.1"/>
<ellipse cx="114.5" cy="604.2" rx="1.98" ry="1.7" stroke-width="1.1"/>
<ellipse cx="125.1" cy="602.6" rx="1.63" ry="1.7" stroke-width="1.1"/>
<ellipse cx="132.5" cy="600.2" rx="1.10" ry="1.7" stroke-width="1.1"/>
<ellipse cx="69.8" cy="603.7" rx="0.79" ry="1.7" stroke-width="1.1"/>
<ellipse cx="75.1" cy="606.4" rx="1.38" ry="1.7" stroke-width="1.1"/>
<ellipse cx="84.3" cy="608.5" rx="1.83" ry="1.7" stroke-width="1.1"/>
<ellipse cx="95.9" cy="609.6" rx="2.07" ry="1.7" stroke-width="1.1"/>
<ellipse cx="108.5" cy="609.6" rx="2.07" ry="1.7" stroke-width="1.1"/>
<ellipse cx="120.1" cy="608.5" rx="1.83" ry="1.7" stroke-width="1.1"/>
<ellipse cx="129.3" cy="606.4" rx="1.38" ry="1.7" stroke-width="1.1"/>
<ellipse cx="134.6" cy="603.7" rx="0.79" ry="1.7" stroke-width="1.1"/>
<ellipse cx="71.9" cy="610.0" rx="1.10" ry="1.7" stroke-width="1.1"/>
<ellipse cx="79.3" cy="612.4" rx="1.63" ry="1.7" stroke-width="1.1"/>
<ellipse cx="89.9" cy="614.0" rx="1.98" ry="1.7" stroke-width="1.1"/>
<ellipse cx="102.2" cy="614.6" rx="2.10" ry="1.7" stroke-width="1.1"/>
<ellipse cx="114.5" cy="614.0" rx="1.98" ry="1.7" stroke-width="1.1"/>
<ellipse cx="125.1" cy="612.4" rx="1.63" ry="1.7" stroke-width="1.1"/>
<ellipse cx="132.5" cy="610.0" rx="1.10" ry="1.7" stroke-width="1.1"/>
<ellipse cx="69.8" cy="613.5" rx="0.79" ry="1.7" stroke-width="1.1"/>
<ellipse cx="75.1" cy="616.2" rx="1.38" ry="1.7" stroke-width="1.1"/>
<ellipse cx="84.3" cy="618.3" rx="1.83" ry="1.7" stroke-width="1.1"/>
<ellipse cx="95.9" cy="619.4" rx="2.07" ry="1.7" stroke-width="1.1"/>
<ellipse cx="108.5" cy="619.4" rx="2.07" ry="1.7" stroke-width="1.1"/>
<ellipse cx="120.1" cy="618.3" rx="1.83" ry="1.7" stroke-width="1.1"/>
<ellipse cx="129.3" cy="616.2" rx="1.38" ry="1.7" stroke-width="1.1"/>
<ellipse cx="134.6" cy="613.5" rx="0.79" ry="1.7" stroke-width="1.1"/>
<ellipse cx="71.9" cy="619.8" rx="1.10" ry="1.7" stroke-width="1.1"/>
<ellipse cx="79.3" cy="622.2" rx="1.63" ry="1.7" stroke-width="1.1"/>
<ellipse cx="89.9" cy="623.8" rx="1.98" ry="1.7" stroke-width="1.1"/>
<ellipse cx="102.2" cy="624.4" rx="2.10" ry="1.7" stroke-width="1.1"/>
<ellipse cx="114.5" cy="623.8" rx="1.98" ry="1.7" stroke-width="1.1"/>
<ellipse cx="125.1" cy="622.2" rx="1.63" ry="1.7" stroke-width="1.1"/>
<ellipse cx="132.5" cy="619.8" rx="1.10" ry="1.7" stroke-width="1.1"/>
<ellipse cx="69.8" cy="623.3" rx="0.79" ry="1.7" stroke-width="1.1"/>
<ellipse cx="75.1" cy="626.0" rx="1.38" ry="1.7" stroke-width="1.1"/>
<ellipse cx="84.3" cy="628.1" rx="1.83" ry="1.7" stroke-width="1.1"/>
<ellipse cx="95.9" cy="629.2" rx="2.07" ry="1.7" stroke-width="1.1"/>
<ellipse cx="108.5" cy="629.2" rx="2.07" ry="1.7" stroke-width="1.1"/>
<ellipse cx="120.1" cy="628.1" rx="1.83" ry="1.7" stroke-width="1.1"/>
<ellipse cx="129.3" cy="626.0" rx="1.38" ry="1.7" stroke-width="1.1"/>
<ellipse cx="134.6" cy="623.3" rx="0.79" ry="1.7" stroke-width="1.1"/>
<ellipse cx="71.9" cy="629.6" rx="1.10" ry="1.7" stroke-width="1.1"/>
<ellipse cx="79.3" cy="632.0" rx="1.63" ry="1.7" stroke-width="1.1"/>
<ellipse cx="89.9" cy="633.6" rx="1.98" ry="1.7" stroke-width="1.1"/>
<ellipse cx="102.2" cy="634.2" rx="2.10" ry="1.7" stroke-width="1.1"/>
<ellipse cx="114.5" cy="633.6" rx="1.98" ry="1.7" stroke-width="1.1"/>
<ellipse cx="125.1" cy="632.0" rx="1.63" ry="1.7" stroke-width="1.1"/>
<ellipse cx="132.5" cy="629.6" rx="1.10" ry="1.7" stroke-width="1.1"/>
<ellipse cx="69.8" cy="633.1" rx="0.79" ry="1.7" stroke-width="1.1"/>
<ellipse cx="75.1" cy="635.8" rx="1.38" ry="1.7" stroke-width="1.1"/>
<ellipse cx="84.3" cy="637.9" rx="1.83" ry="1.7" stroke-width="1.1"/>
<ellipse cx="95.9" cy="639.0" rx="2.07" ry="1.7" stroke-width="1.1"/>
<ellipse cx="108.5" cy="639.0" rx="2.07" ry="1.7" stroke-width="1.1"/>
<ellipse cx="120.1" cy="637.9" rx="1.83" ry="1.7" stroke-width="1.1"/>
<ellipse cx="129.3" cy="635.8" rx="1.38" ry="1.7" stroke-width="1.1"/>
<ellipse cx="134.6" cy="633.1" rx="0.79" ry="1.7" stroke-width="1.1"/>
<ellipse cx="71.9" cy="639.4" rx="1.10" ry="1.7" stroke-width="1.1"/>
<ellipse cx="79.3" cy="641.8" rx="1.63" ry="1.7" stroke-width="1.1"/>
<ellipse cx="89.9" cy="643.4" rx="1.98" ry="1.7" stroke-width="1.1"/>
<ellipse cx="102.2" cy="644.0" rx="2.10" ry="1.7" stroke-width="1.1"/>
<ellipse cx="114.5" cy="643.4" rx="1.98" ry="1.7" stroke-width="1.1"/>
<ellipse cx="125.1" cy="641.8" rx="1.63" ry="1.7" stroke-width="1.1"/>
<ellipse cx="132.5" cy="639.4" rx="1.10" ry="1.7" stroke-width="1.1"/>
<ellipse cx="84.3" cy="647.7" rx="1.83" ry="1.7" stroke-width="1.1"/>
<ellipse cx="95.9" cy="648.8" rx="2.07" ry="1.7" stroke-width="1.1"/>
<ellipse cx="108.5" cy="648.8" rx="2.07" ry="1.7" stroke-width="1.1"/>
<ellipse cx="120.1" cy="647.7" rx="1.83" ry="1.7" stroke-width="1.1"/>
<path d="M65.6,563.8 Q65,572 68.4,576.2 M140.3,565 Q141,572 138.7,577.3" stroke-width="1.2"/>
<path d="M68.4,576 A36.5,16 0 0 0 138.7,577"/>
<path d="M67.9,580 A36.5,14 0 0 0 138.7,580" stroke-width="0.9"/>
<path d="M73.5,556 A33,12 0 0 1 134.7,557.1" stroke-width="1.1"/>
<ellipse cx="104.7" cy="548.3" rx="40.2" ry="24.4" stroke-width="1.6"/>
<ellipse cx="105" cy="548.6" rx="36.5" ry="20.8" stroke-width="1.5"/>
<path d="M70,555 A38,22 0 0 0 140,555" stroke-width="0.6" stroke-dasharray="2 3"/>
<ellipse cx="102.1" cy="565" rx="5" ry="2.2"/>
<path d="M28.8,558.2 H37.1 M37.1,538.4 V578 M37.1,538.4 H48.3 M37.1,578 H48.3"/>
<path d="M53.9,547 H65.2 M53.9,569 H66.3"/>

<path d="M129.7,328.1 L158.9,343.2 L162.6,336.0 L133.3,320.9 Q126.9,322.1 129.7,328.1" fill="#fff" stroke="none"/>
<path d="M129.7,328.1 L158.9,343.2 M133.3,320.9 L162.6,336.0 M129.7,328.1 Q126.9,322.1 133.3,320.9" stroke-width="1.4"/>
<path d="M130.6,327.6 L135.1,322.8 M132.3,328.5 L136.9,323.7 M134.1,329.5 L138.7,324.6 M135.9,330.4 L140.4,325.5 M137.7,331.3 L142.2,326.4 M139.5,332.2 L144.0,327.3 M141.2,333.1 L145.8,328.3 M143.0,334.0 L147.5,329.2 M144.8,335.0 L149.3,330.1 M146.6,335.9 L151.1,331.0 M148.3,336.8 L152.9,331.9 M150.1,337.7 L154.7,332.8 M151.9,338.6 L156.4,333.8" stroke-width="1" stroke="#222"/>
<path d="M157.6,331.5 L166.6,331.5 L170.8,335.6 L172.3,341.0 L170.5,346.4 L166.6,349.8 L157.6,349.8 L152.7,340.7 Z" fill="#fff" stroke-width="1.3"/>
<path d="M162.0,331.5 L157.6,340.7 L162.0,349.8" stroke-width="1"/>
<path d="M115.7,345.0 L174.5,378.6 L178.1,372.1 L119.3,338.6 Q113.3,339.4 115.7,345.0" fill="#fff" stroke="none"/>
<path d="M115.7,345.0 L174.5,378.6 M119.3,338.6 L178.1,372.1 M115.7,345.0 Q113.3,339.4 119.3,338.6" stroke-width="1.4"/>
<path d="M116.6,344.7 L121.1,340.4 M118.3,345.7 L122.8,341.4 M120.0,346.6 L124.5,342.4 M121.8,347.6 L126.3,343.4 M123.5,348.6 L128.0,344.4 M125.2,349.6 L129.7,345.4 M127.0,350.6 L131.5,346.4 M128.7,351.6 L133.2,347.4 M130.5,352.6 L135.0,348.3 M132.2,353.6 L136.7,349.3" stroke-width="1" stroke="#222"/>
<path d="M173.2,367.4 L182.1,367.4 L186.2,371.4 L187.7,376.8 L186.0,382.1 L182.1,385.5 L173.2,385.5 L168.3,376.5 Z" fill="#fff" stroke-width="1.3"/>
<path d="M177.5,367.4 L173.2,376.5 L177.5,385.5" stroke-width="1"/>
<path d="M183.2,290.7 L246.7,321.2 L250.3,313.8 L186.8,283.3 Q180.2,284.7 183.2,290.7" fill="#fff" stroke="none"/>
<path d="M183.2,290.7 L246.7,321.2 M186.8,283.3 L250.3,313.8 M183.2,290.7 Q180.2,284.7 186.8,283.3 M246.7,321.2 Q253.3,319.8 250.3,313.8" stroke-width="1.4"/>
<path d="M184.1,290.2 L188.6,285.1 M185.9,291.1 L190.4,285.9 M187.7,291.9 L192.2,286.8 M189.5,292.8 L194.0,287.7 M191.3,293.7 L195.8,288.5 M193.1,294.5 L197.6,289.4 M194.9,295.4 L199.4,290.3 M196.7,296.3 L201.2,291.1 M223.7,309.2 L228.2,304.1 M225.5,310.1 L230.0,305.0 M227.3,311.0 L231.8,305.8 M229.1,311.8 L233.6,306.7 M230.9,312.7 L235.4,307.6 M232.7,313.6 L237.2,308.4 M234.6,314.4 L239.0,309.3 M236.4,315.3 L240.8,310.2 M238.2,316.2 L242.6,311.0 M240.0,317.0 L244.4,311.9 M241.8,317.9 L246.2,312.8 M243.6,318.8 L248.0,313.6" stroke-width="1" stroke="#222"/>
<path d="M301.6,336.7 L331.2,348.4 L334.0,341.3 L304.4,329.7 Q298.4,331.4 301.6,336.7" fill="#fff" stroke="none"/>
<path d="M301.6,336.7 L331.2,348.4 M304.4,329.7 L334.0,341.3 M301.6,336.7 Q298.4,331.4 304.4,329.7" stroke-width="1.4"/>
<path d="M302.4,336.2 L306.3,331.2 M304.3,337.0 L308.2,332.0 M306.2,337.7 L310.1,332.7 M308.0,338.4 L311.9,333.4 M309.9,339.2 L313.8,334.2 M311.8,339.9 L315.7,334.9 M313.6,340.6 L317.5,335.6 M315.5,341.4 L319.4,336.4 M317.3,342.1 L321.2,337.1 M319.2,342.8 L323.1,337.8" stroke-width="1" stroke="#222"/>
<path d="M329.8,337.2 L338.1,337.2 L341.9,341.0 L343.3,345.9 L341.7,350.9 L338.1,354.1 L329.8,354.1 L325.3,345.7 Z" fill="#fff" stroke-width="1.3"/>
<path d="M333.9,337.2 L329.8,345.7 L333.9,354.1" stroke-width="1"/>
<path d="M248.6,413.0 L304.4,445.2 L308.4,438.3 L252.6,406.0 Q246.1,406.9 248.6,413.0" fill="#fff" stroke="none"/>
<path d="M248.6,413.0 L304.4,445.2 M252.6,406.0 L308.4,438.3 M248.6,413.0 Q246.1,406.9 252.6,406.0" stroke-width="1.4"/>
<path d="M249.5,412.6 L254.3,407.9 M251.2,413.6 L256.0,408.9 M253.0,414.6 L257.7,409.9 M254.7,415.6 L259.5,410.9 M256.4,416.6 L261.2,411.9 M258.2,417.6 L262.9,412.9 M259.9,418.6 L264.7,413.9 M261.6,419.6 L266.4,414.9 M263.4,420.6 L268.1,415.9 M265.1,421.6 L269.9,416.9" stroke-width="1" stroke="#222"/>
<path d="M303.2,434.0 L312.0,434.0 L316.1,437.9 L317.5,443.2 L315.8,448.4 L312.0,451.7 L303.2,451.7 L298.5,442.9 Z" fill="#fff" stroke-width="1.3"/>
<path d="M307.5,434.0 L303.2,442.9 L307.5,451.7" stroke-width="1"/>
<path d="M256.9,487.1 L338.2,530.2 L341.5,524.0 L260.1,480.9 Q254.5,481.9 256.9,487.1" fill="#fff" stroke="none"/>
<path d="M256.9,487.1 L338.2,530.2 M260.1,480.9 L341.5,524.0 M256.9,487.1 Q254.5,481.9 260.1,480.9" stroke-width="1.4"/>
<path d="M257.7,486.8 L261.9,482.7 M259.5,487.7 L263.7,483.6 M261.3,488.6 L265.5,484.5 M263.0,489.6 L267.2,485.5 M264.8,490.5 L269.0,486.4 M266.6,491.4 L270.8,487.3 M268.3,492.4 L272.5,488.3 M270.1,493.3 L274.3,489.2" stroke-width="1" stroke="#222"/>
<path d="M336.8,519.3 L345.5,519.3 L349.6,523.2 L351.0,528.5 L349.3,533.7 L345.5,537.0 L336.8,537.0 L332.0,528.2 Z" fill="#fff" stroke-width="1.3"/>
<path d="M341.0,519.3 L336.8,528.2 L341.0,537.0" stroke-width="1"/>
<path d="M284.0,596.9 L314.8,609.0 L317.7,601.6 L287.0,589.5 Q280.7,591.3 284.0,596.9" fill="#fff" stroke="none"/>
<path d="M284.0,596.9 L314.8,609.0 M287.0,589.5 L317.7,601.6 M284.0,596.9 Q280.7,591.3 287.0,589.5" stroke-width="1.4"/>
<path d="M284.9,596.4 L288.9,591.1 M286.7,597.1 L290.8,591.8 M288.6,597.9 L292.6,592.6 M290.5,598.6 L294.5,593.3 M292.3,599.3 L296.3,594.0 M294.2,600.1 L298.2,594.8 M296.1,600.8 L300.1,595.5 M297.9,601.5 L301.9,596.2 M299.8,602.3 L303.8,597.0 M301.6,603.0 L305.7,597.7 M303.5,603.7 L307.5,598.4 M305.4,604.5 L309.4,599.2" stroke-width="1" stroke="#222"/>
<path d="M313.2,597.3 L322.0,597.3 L326.1,601.2 L327.5,606.5 L325.8,611.7 L322.0,615.0 L313.2,615.0 L308.5,606.2 Z" fill="#fff" stroke-width="1.3"/>
<path d="M317.5,597.3 L313.2,606.2 L317.5,615.0" stroke-width="1"/>
<path d="M205.3,595.6 L263.9,623.1 L267.3,615.9 L208.7,588.4 Q202.3,589.8 205.3,595.6" fill="#fff" stroke="none"/>
<path d="M205.3,595.6 L263.9,623.1 M208.7,588.4 L267.3,615.9 M205.3,595.6 Q202.3,589.8 208.7,588.4" stroke-width="1.4"/>
<path d="M206.2,595.2 L210.5,590.1 M208.0,596.0 L212.3,591.0 M209.8,596.9 L214.2,591.8 M211.6,597.7 L216.0,592.7 M213.4,598.6 L217.8,593.5 M215.2,599.4 L219.6,594.4 M217.0,600.3 L221.4,595.2 M218.9,601.1 L223.2,596.1 M220.7,601.9 L225.0,596.9 M222.5,602.8 L226.8,597.8 M224.3,603.6 L228.6,598.6" stroke-width="1" stroke="#222"/>
<path d="M262.6,611.6 L271.3,611.6 L275.4,615.5 L276.8,620.8 L275.1,626.0 L271.3,629.3 L262.6,629.3 L257.8,620.5 Z" fill="#fff" stroke-width="1.3"/>
<path d="M266.8,611.6 L262.6,620.5 L266.8,629.3" stroke-width="1"/>
<path d="M298.2,266.8 L319.5,255.0 L316.1,248.7 L294.8,260.4 Q292.4,265.9 298.2,266.8" fill="#fff" stroke="none"/>
<path d="M298.2,266.8 L319.5,255.0 M294.8,260.4 L316.1,248.7 M298.2,266.8 Q292.4,265.9 294.8,260.4" stroke-width="1.4"/>
<path d="M298.4,265.8 L297.2,259.9 M300.2,264.9 L299.0,259.0 M301.9,263.9 L300.7,258.0 M303.7,262.9 L302.5,257.0 M305.4,262.0 L304.2,256.1 M307.2,261.0 L306.0,255.1 M308.9,260.0 L307.7,254.1 M310.7,259.1 L309.5,253.2 M312.4,258.1 L311.2,252.2 M314.2,257.1 L313.0,251.2" stroke-width="1" stroke="#222"/>
<path d="M315.6,257.5 L321.9,257.5 L324.8,254.6 L325.8,250.9 L324.6,247.1 L321.9,244.7 L315.6,244.7 L312.2,251.1 Z" fill="#fff" stroke-width="1.3"/>
<path d="M318.7,257.5 L315.6,251.1 L318.7,244.7" stroke-width="1"/>
<!-- washers -->
<ellipse cx="114.4" cy="314.5" rx="6.8" ry="8.4" transform="rotate(25 114.4 314.5)" fill="#fff" stroke-width="1.6"/>
<ellipse cx="114.7" cy="314.5" rx="2.945" ry="4.75" transform="rotate(25 114.4 314.5)" stroke-width="1.9"/>
<ellipse cx="114.0" cy="314.7" rx="5.576" ry="7.14" transform="rotate(25 114.4 314.5)" stroke-width="0.6"/>
<ellipse cx="111.9" cy="338.9" rx="6.5" ry="8.3" transform="rotate(25 111.9 338.9)" fill="#fff" stroke-width="1.6"/>
<ellipse cx="112.2" cy="338.9" rx="2.8499999999999996" ry="4.56" transform="rotate(25 111.9 338.9)" stroke-width="1.9"/>
<ellipse cx="111.5" cy="339.09999999999997" rx="5.33" ry="7.055000000000001" transform="rotate(25 111.9 338.9)" stroke-width="0.6"/>
<ellipse cx="295.2" cy="327.2" rx="6.4" ry="8.4" transform="rotate(20 295.2 327.2)" fill="#fff" stroke-width="1.6"/>
<ellipse cx="295.5" cy="327.2" rx="2.8499999999999996" ry="4.369999999999999" transform="rotate(20 295.2 327.2)" stroke-width="1.9"/>
<ellipse cx="294.8" cy="327.4" rx="5.248" ry="7.14" transform="rotate(20 295.2 327.2)" stroke-width="0.6"/>
<ellipse cx="314.7" cy="351.3" rx="6.2" ry="8.3" transform="rotate(20 314.7 351.3)" fill="#fff" stroke-width="1.6"/>
<ellipse cx="315.0" cy="351.3" rx="2.755" ry="4.18" transform="rotate(20 314.7 351.3)" stroke-width="1.9"/>
<ellipse cx="314.3" cy="351.5" rx="5.084" ry="7.055000000000001" transform="rotate(20 314.7 351.3)" stroke-width="0.6"/>
<ellipse cx="241.1" cy="403.7" rx="6" ry="7.6" transform="rotate(20 241.1 403.7)" fill="#fff" stroke-width="1.6"/>
<ellipse cx="241.4" cy="403.7" rx="2.6599999999999997" ry="3.9899999999999998" transform="rotate(20 241.1 403.7)" stroke-width="1.9"/>
<ellipse cx="240.7" cy="403.9" rx="4.92" ry="6.46" transform="rotate(20 241.1 403.7)" stroke-width="0.6"/>
<ellipse cx="253.7" cy="479.5" rx="5.2" ry="6.8" transform="rotate(20 253.7 479.5)" fill="#fff" stroke-width="1.3"/>
<ellipse cx="254.0" cy="479.5" rx="2.4699999999999998" ry="3.61" transform="rotate(20 253.7 479.5)" stroke-width="1.3"/>
<ellipse cx="253.29999999999998" cy="479.7" rx="4.264" ry="5.779999999999999" transform="rotate(20 253.7 479.5)" stroke-width="0.6"/>
<path d="M257,474.5 L259.5,476.5" stroke-width="1.2"/>
<ellipse cx="198.7" cy="586.4" rx="6.2" ry="8.3" transform="rotate(15 198.7 586.4)" fill="#fff" stroke-width="1.3"/>
<ellipse cx="199.0" cy="586.4" rx="3.135" ry="4.085" transform="rotate(15 198.7 586.4)" stroke-width="1.4"/>
<ellipse cx="198.29999999999998" cy="586.6" rx="5.084" ry="7.055000000000001" transform="rotate(15 198.7 586.4)" stroke-width="0.6"/>
<ellipse cx="275.7" cy="586.3" rx="6" ry="7.6" transform="rotate(15 275.7 586.3)" fill="#fff" stroke-width="1.3"/>
<ellipse cx="276.0" cy="586.3" rx="2.8499999999999996" ry="3.8" transform="rotate(15 275.7 586.3)" stroke-width="1.3"/>
<ellipse cx="275.3" cy="586.5" rx="4.92" ry="6.46" transform="rotate(15 275.7 586.3)" stroke-width="0.6"/>
<path d="M279.5,580 L282.5,582.5" stroke-width="1.2"/>
<!-- leaders -->
<path d="M217,282 V296.4"/>
<path d="M302.8,305.6 L297.9,320.9"/>
<path d="M325.4,320 L322.5,337.6"/>
<path d="M312.1,360.2 V374"/>
<path d="M330.4,370 V383"/>
<path d="M212.7,416.3 L234.8,407.9"/>
<path d="M287.4,450 L291.6,441.6"/>
<path d="M210.5,470 H221"/>
<path d="M243.2,497.4 L249.5,488"/>
<path d="M328.7,547 L332.7,537.2"/>
<path d="M296.3,570.6 L280.6,579.4"/>
<path d="M318.9,586.3 L307.1,594.2"/>
<path d="M268,628.6 V648.9"/>
<path d="M226.7,659.7 L230.3,644.2"/>
<path d="M152.7,626.3 L168.2,617.9"/>
<path d="M125.3,256.6 L115.7,269.5"/>
<path d="M140,266 L137.2,272"/>
<path d="M148.5,284.7 L120.5,306"/>
<path d="M154.5,295.5 L117,332"/>
<path d="M185,331.3 L171.6,336.9"/>
<path d="M179.5,386.6 V401.2"/>
<path d="M107.7,485.8 L116.9,472.1 M107.7,485.8 L94,483"/>
<path d="M33.8,251 L38.3,259.2"/>
<!-- nut 16 -->
<path d="M323,358 L330,352 L338,355 L340,363 L333,370 L325,367 Z" fill="#fff" stroke-width="1.3"/>
<ellipse cx="332.5" cy="361" rx="3.2" ry="4.2" stroke-width="1.3"/>
<ellipse cx="332.5" cy="361" rx="1.5" ry="2.2" fill="#555"/>

</g>
<!-- labels -->
<g stroke="none">
<rect x="23.7" y="240" width="10.1" height="11" fill="#ffff00"/>
<rect x="124" y="244" width="7" height="11.7" fill="#00ee00"/>
<rect x="136" y="253.3" width="9" height="11.7" fill="#ffff00"/>
<rect x="148.9" y="274" width="9" height="11.2" fill="#ffff00"/>
<rect x="155" y="286" width="9.9" height="10.9" fill="#ffff00"/>
<rect x="185" y="322.2" width="9.8" height="10.8" fill="#ffff00"/>
<rect x="175" y="404" width="8.7" height="10.4" fill="#ffff00"/>
<rect x="104" y="487.3" width="8.8" height="10.4" fill="#ffff00"/>
<rect x="195" y="415.8" width="15" height="10.1" fill="#ffff00"/>
<rect x="193.7" y="465.8" width="13.7" height="9.5" fill="#ffff00"/>
<rect x="209.1" y="270.8" width="13.7" height="10.8" fill="#ffff00"/>
<rect x="318.6" y="309.1" width="13.7" height="9.9" fill="#ffff00"/>
<rect x="305.4" y="375" width="12.2" height="9.8" fill="#ffff00"/>
<rect x="323.1" y="383.8" width="12.6" height="10.2" fill="#ffff00"/>
<rect x="275.8" y="451.1" width="14.8" height="10.5" fill="#ffff00"/>
<rect x="318.9" y="548" width="13.8" height="10.8" fill="#ffff00"/>
<rect x="15.7" y="553.3" width="13.1" height="10.5" fill="#f08a8a"/>
</g>
<g font-family="Liberation Sans" font-size="10" fill="#000">
<text x="25" y="250">3</text>
<text x="124.5" y="254.5">1</text>
<text x="137.5" y="263.5">4</text>
<text x="150.5" y="283.5">6</text>
<text x="157" y="295">8</text>
<text x="187" y="331">5</text>
<text x="176.5" y="412.5">7</text>
<text x="105.5" y="496">9</text>
<text x="196.5" y="424.5">23</text>
<text x="194.5" y="474">10</text>
<text x="210.5" y="280">15</text>
<text x="320" y="318">18</text>
<text x="306" y="383.5">17</text>
<text x="324" y="392.5">16</text>
<text x="277.5" y="460">22</text>
<text x="320" y="557">20</text>
<text x="16.5" y="562">12</text>
</g>
<g font-family="Liberation Sans" font-size="10.3" fill="#222">
<text x="17.8" y="377.2">2</text>
<text x="231.8" y="222.7">29</text>
<text x="253.3" y="222.7">30</text>
<text x="331.3" y="272.2">31</text>
<text x="310.8" y="285.7">32</text>
<text x="259.3" y="292.5">11</text>
<text x="297.3" y="304.0">19</text>
<text x="233.3" y="507.7">21</text>
<text x="297.8" y="568.5">28</text>
<text x="321.3" y="584.3">26</text>
<text x="174.8" y="533.0">25</text>
<text x="137.8" y="636.1">28</text>
<text x="220.3" y="667.7">24</text>
<text x="262.8" y="659.5">27</text>
<text x="38.8" y="551.3">14</text>
<text x="39.8" y="573.7">13</text>
</g>

</svg>
<svg width="44" height="52" style="left:1116px;top:660px">
<g fill="none" stroke="#1b5aa5" stroke-width="2.7">
<circle cx="12.5" cy="11.7" r="6.4"/><circle cx="29.3" cy="11.7" r="6.4"/><circle cx="12.5" cy="29.1" r="6.4"/><circle cx="29.3" cy="29.1" r="6.4"/>
<path d="M8.2,16 L16.8,7.4 M25,7.4 L33.6,16 M8.2,24.8 L16.8,33.4 M33.6,24.8 L25,33.4" stroke-width="2.3"/>
</g>
<path d="M20.9,3.3 L22.6,20.4 L20.9,37.5 L19.2,20.4 Z M4.7,20.4 L20.9,18.8 L37,20.4 L20.9,22 Z" fill="#1b5aa5"/>
<text x="3.2" y="49.8" font-family="Liberation Sans" font-weight="bold" font-size="12" fill="#1b5aa5" letter-spacing="-0.75">Perkins</text>
<circle cx="41.5" cy="43.5" r="0.8" fill="#1b5aa5"/>
</svg>
</body></html>
